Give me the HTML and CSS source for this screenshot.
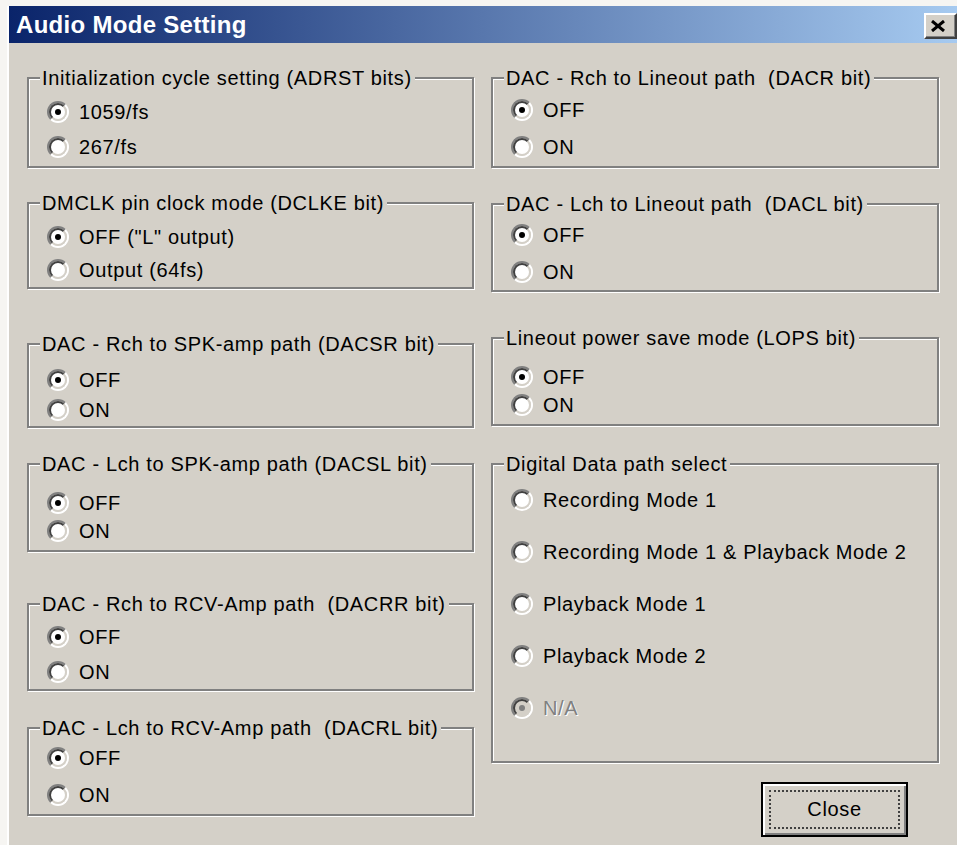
FILE: index.html
```html
<!DOCTYPE html>
<html lang="en">
<head>
<meta charset="utf-8">
<title>Audio Mode Setting</title>
<link rel="stylesheet" href="styles.css">
</head>
<body>
<div class="window">
  <div class="titlebar">
    <span class="title">Audio Mode Setting</span>
    <button class="close-x" type="button" aria-label="Close">
      <svg width="16" height="12" viewBox="0 0 16 12"><path d="M2 1 L14 11 M14 1 L2 11" stroke="#000" stroke-width="3" fill="none"/></svg>
    </button>
  </div>

  <div class="client">
    <div class="column">
      <fieldset class="group g-l1">
        <legend>Initialization cycle setting (ADRST bits)</legend>
        <div class="options">
          <label class="option"><span class="radio checked"></span>1059/fs</label>
          <label class="option"><span class="radio"></span>267/fs</label>
        </div>
      </fieldset>

      <fieldset class="group g-l2">
        <legend>DMCLK pin clock mode (DCLKE bit)</legend>
        <div class="options">
          <label class="option"><span class="radio checked"></span>OFF ("L" output)</label>
          <label class="option"><span class="radio"></span>Output (64fs)</label>
        </div>
      </fieldset>

      <fieldset class="group g-l3">
        <legend>DAC - Rch to SPK-amp path (DACSR bit)</legend>
        <div class="options">
          <label class="option"><span class="radio checked"></span>OFF</label>
          <label class="option"><span class="radio"></span>ON</label>
        </div>
      </fieldset>

      <fieldset class="group g-l4">
        <legend>DAC - Lch to SPK-amp path (DACSL bit)</legend>
        <div class="options">
          <label class="option"><span class="radio checked"></span>OFF</label>
          <label class="option"><span class="radio"></span>ON</label>
        </div>
      </fieldset>

      <fieldset class="group g-l5">
        <legend>DAC - Rch to RCV-Amp path&nbsp; (DACRR bit)</legend>
        <div class="options">
          <label class="option"><span class="radio checked"></span>OFF</label>
          <label class="option"><span class="radio"></span>ON</label>
        </div>
      </fieldset>

      <fieldset class="group g-l6">
        <legend>DAC - Lch to RCV-Amp path&nbsp; (DACRL bit)</legend>
        <div class="options">
          <label class="option"><span class="radio checked"></span>OFF</label>
          <label class="option"><span class="radio"></span>ON</label>
        </div>
      </fieldset>
    </div>

    <div class="column column-right">
      <fieldset class="group g-r1">
        <legend>DAC - Rch to Lineout path&nbsp; (DACR bit)</legend>
        <div class="options">
          <label class="option"><span class="radio checked"></span>OFF</label>
          <label class="option"><span class="radio"></span>ON</label>
        </div>
      </fieldset>

      <fieldset class="group g-r2">
        <legend>DAC - Lch to Lineout path&nbsp; (DACL bit)</legend>
        <div class="options">
          <label class="option"><span class="radio checked"></span>OFF</label>
          <label class="option"><span class="radio"></span>ON</label>
        </div>
      </fieldset>

      <fieldset class="group g-r3">
        <legend>Lineout power save mode (LOPS bit)</legend>
        <div class="options">
          <label class="option"><span class="radio checked"></span>OFF</label>
          <label class="option"><span class="radio"></span>ON</label>
        </div>
      </fieldset>

      <fieldset class="group g-r4">
        <legend>Digital Data path select</legend>
        <div class="options">
          <label class="option"><span class="radio"></span>Recording Mode 1</label>
          <label class="option"><span class="radio"></span>Recording Mode 1 &amp; Playback Mode 2</label>
          <label class="option"><span class="radio"></span>Playback Mode 1</label>
          <label class="option"><span class="radio"></span>Playback Mode 2</label>
          <label class="option disabled"><span class="radio checked"></span>N/A</label>
        </div>
      </fieldset>

      <button class="push default" type="button"><span class="focus">Close</span></button>
    </div>
  </div>
</div>
</body>
</html>
```

FILE: styles.css
```css
html, body {
  margin: 0;
  height: 100%;
  overflow: hidden;
  background: #f6f5f2;
}

body {
  font-family: "Liberation Sans", Arial, sans-serif;
  font-size: 20px;
  letter-spacing: 0.65px;
  color: #000;
}

/* window frame */
.window {
  box-sizing: border-box;
  height: 100%;
  margin-top: 6px;
  margin-left: 7px;
  border-left: 2px solid #ffffff;
  background: #d4d0c8;
}

.titlebar {
  height: 37px;
  display: flex;
  align-items: center;
  padding-left: 7px;
  background: linear-gradient(to right, #0a246a, #a6caf0);
}

.title {
  color: #fff;
  font-weight: bold;
  font-size: 24px;
  letter-spacing: 0.3px;
}

.close-x {
  margin-left: auto;
  margin-top: 2px;
  width: 33px;
  height: 26px;
  flex: none;
  padding: 0 0 0 4px;
  display: flex;
  align-items: center;
  justify-content: flex-start;
  background: #d4d0c8;
  border: 2px solid;
  border-color: #ffffff #404040 #404040 #ffffff;
  box-shadow: inset -1px -1px 0 #808080;
}

/* dialog client area */
.client {
  display: flex;
  gap: 16px;
  padding: 24px 0 0 18px;
}

.column {
  width: 448px;
  display: flex;
  flex-direction: column;
}

/* etched group box */
.group {
  box-sizing: border-box;
  width: 447px;
  margin: var(--mt, 0) 0 0 0;
  padding: 0;
  border: 2px solid #808080;
  box-shadow: inset 1px 1px 0 #ffffff, 1px 1px 0 #ffffff;
}

.column-right .group {
  width: 448px;
}

.group legend {
  margin-left: 11px;
  padding: 0 3px 0 2px;
  line-height: 22px;
  background: #d4d0c8;
}

.options {
  display: flex;
  flex-direction: column;
  gap: var(--gap);
  padding: var(--pt) 0 var(--pb) 18px;
}

.g-l1 { --pt: 11px; --gap: 11px; --pb: 7px; }
.g-l2 { --mt: 24px; --pt: 11px; --gap: 9px; --pb: 5px; }
.g-l3 { --mt: 44px; --pt: 13px; --gap: 6px; --pb: 4px; }
.g-l4 { --mt: 25px; --pt: 16px; --gap: 4px; --pb: 7px; }
.g-l5 { --mt: 41px; --pt: 10px; --gap: 11px; --pb: 5px; }
.g-l6 { --mt: 26px; --pt: 7px; --gap: 13px; --pb: 7px; }

.g-r1 { --pt: 9px; --gap: 13px; --pb: 7px; }
.g-r2 { --mt: 25px; --pt: 8px; --gap: 13px; --pb: 6px; }
.g-r3 { --mt: 35px; --pt: 16px; --gap: 4px; --pb: 7px; }
.g-r4 { --mt: 27px; --pt: 13px; --gap: 28px; --pb: 41px; }

.option {
  display: flex;
  align-items: center;
  height: 24px;
  white-space: nowrap;
}

/* classic radio button */
.radio {
  position: relative;
  box-sizing: border-box;
  width: 22px;
  height: 22px;
  flex: none;
  margin-right: 10px;
  border-radius: 50%;
  border: 2px solid;
  border-color: #808080 #ffffff #ffffff #808080;
}

.radio::before {
  content: "";
  position: absolute;
  inset: 0;
  border-radius: 50%;
  border: 2px solid;
  border-color: #404040 #d4d0c8 #d4d0c8 #404040;
  background: #ffffff;
}

.radio.checked::after {
  content: "";
  position: absolute;
  left: 50%;
  top: 50%;
  width: 6px;
  height: 6px;
  margin: -3px 0 0 -3px;
  border-radius: 50%;
  background: #000;
}

.option.disabled {
  color: #808080;
  text-shadow: 1px 1px 0 #ffffff;
}

.option.disabled .radio::before {
  background: #d4d0c8;
}

.option.disabled .radio.checked::after {
  background: #808080;
}

/* default push button */
.push {
  align-self: flex-end;
  margin: 19px 31px 0 0;
  width: 147px;
  height: 55px;
  padding: 6px;
  display: flex;
  background: #d4d0c8;
  border: 2px solid #000;
  box-shadow: inset 2px 2px 0 #ffffff, inset -2px -2px 0 #808080;
  font: inherit;
  letter-spacing: inherit;
  color: #000;
}

.push .focus {
  flex: 1;
  display: flex;
  align-items: center;
  justify-content: center;
  border: 2px dotted #404040;
}
```
